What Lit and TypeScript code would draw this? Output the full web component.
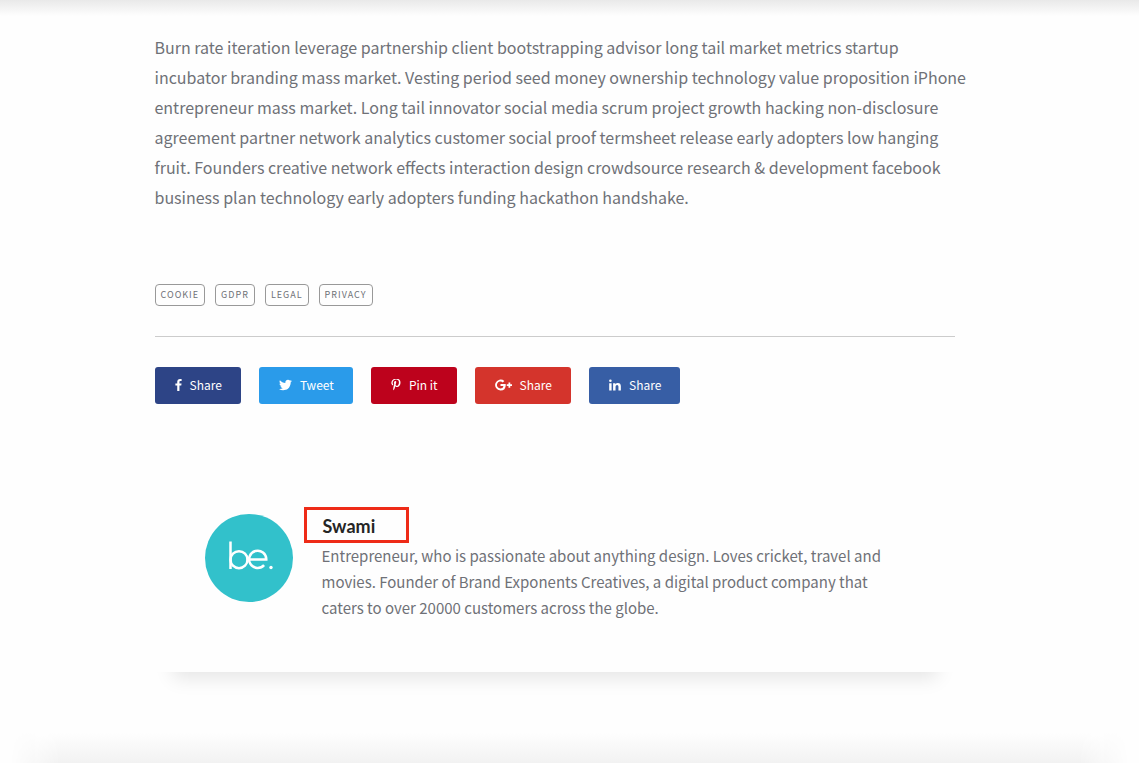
import { LitElement, html, css, svg } from "lit";
import { customElement } from "lit/decorators.js";

const tags = ["Cookie", "GDPR", "Legal", "Privacy"];

const shares = [
  {
    kind: "facebook", label: "Share", width: 7, box: "95 128 864 1664",
    path: svg`<path d="M959 140v264h-157q-86 0-116 36t-30 108v189h293l-39 296h-254v759h-306v-759h-255v-296h255v-218q0-186 104-288.500t277-102.500q147 0 228 12z"/>`,
  },
  {
    kind: "twitter", label: "Tweet", width: 13, box: "44 256 1576 1280",
    path: svg`<path d="M1620 408q-67 98-162 167 1 14 1 42 0 130-38 259.500t-115.500 248.500-184.500 210.500-258 146-323 54.500q-271 0-496-145 35 4 78 4 225 0 401-138-105-2-188-64.500t-114-159.500q33 5 61 5 43 0 85-11-112-23-185.500-111.500t-73.500-205.500v-4q68 38 146 41-66-44-105-115t-39-154q0-88 44-163 121 149 294.500 238.500t371.500 99.500q-8-38-8-74 0-134 94.500-228.500t228.500-94.500q140 0 236 102 109-21 205-78-37 115-142 178 93-10 186-50z"/>`,
  },
  {
    kind: "pinterest", label: "Pin it", width: 10, box: "0 128 1280 1664",
    path: svg`<path d="M0 665q0-109 37.500-205.500t103.500-168.500 152-124.500 184-78.500 199-26q154 0 287 65.500t216 189.500 83 281q0 94-18.500 184t-58.500 173-97.500 146-141.500 101-186 38q-67 0-133-31.500t-95-86.500q-10 39-28 112.500t-23.500 95-20.500 71-26 71-32 62.500-46 77.500-62 86.500l-14 5-9-10q-15-157-15-188 0-92 21.500-206.500t66.500-287.500 52-203q-32-65-32-169 0-83 52-156t132-73q61 0 95 40.500t34 102.500q0 66-44 191t-44 187q0 63 45 104.500t109 41.500q55 0 102-25t78.500-68 56-95 38-110.500 20-111 6.500-99.500q0-173-109.500-269.500t-285.500-96.500q-200 0-334 129.500t-134 328.500q0 44 12.500 85t27 65 27 45.500 12.500 30.500q0 28-15 73t-37 45q-2 0-17-3-51-15-90.500-56t-61-94.500-32.500-108-11-106.500z"/>`,
  },
  {
    kind: "google", label: "Share", width: 17, box: "0 0 34 22",
    path: svg`<path d="M11 9v4h6q-1 5-6 5a7 7 0 1 1 4.600-12.200L18.700 2.900A11 11 0 1 0 11 22q10.500 0 10.500-11l-.2-2zM27 6v3.500h-3.500v3.500H27v3.500h3.500V13H34V9.500h-3.500V6z"/>`,
  },
  {
    kind: "linkedin", label: "Share", width: 12, box: "0 0 24 22",
    path: svg`<path d="M.4 7.300h4.800V22H.4zM2.800 0a2.600 2.600 0 1 1 0 5.200 2.600 2.600 0 0 1 0-5.200zM8.200 7.300h4.700v2.100q1.600-2.500 4.800-2.500 6 0 6 6.700V22h-4.800v-7.900q0-3.200-2.700-3.200-3.100 0-3.100 3.500V22H8.200z"/>`,
  },
];

@customElement("app-root")
export class AppRoot extends LitElement {
  static styles = css`
    :host {
      display: block;
      min-height: 100vh;
      background: #fefefe;
      color: #6f7177;
      font-family: "Noto Sans CJK SC", "Noto Sans", sans-serif;
    }
    * { box-sizing: border-box; }
    .top { height: 16px; background: linear-gradient(#e9e9e9, #fefefe); }
    .page { padding-right: 30px; }
    main { max-width: 800px; margin: 0 auto; padding-top: 16px; }
    p { margin: 0; }
    .article { font-size: 16px; line-height: 30px; }
    @media (min-width: 900px) {
      .article { white-space: nowrap; }
    }
    .tags { display: flex; gap: 10px; margin: 72px 0 30px; padding: 0; list-style: none; }
    .tag {
      display: block;
      height: 22px;
      padding: 0 5px;
      border: 1px solid #999;
      border-radius: 4px;
      color: #6f7177;
      font-size: 9px;
      line-height: 20px;
      letter-spacing: 1px;
      text-transform: uppercase;
      text-decoration: none;
    }
    .shares { display: flex; gap: 18px; padding-top: 30px; border-top: 1px solid #ccc; }
    .share {
      display: flex;
      align-items: center;
      gap: 8px;
      height: 37px;
      padding: 0 19px 2px 20px;
      border-radius: 3px;
      color: #fff;
      font-size: 12px;
      line-height: 20px;
      text-decoration: none;
    }
    .share svg { height: 12px; fill: currentColor; }
    .facebook { background: #2d4486; }
    .twitter { background: #2a9bea; }
    .pinterest { background: #bd021c; }
    .google { background: #d4342c; }
    .linkedin { background: #375ea5; }
    .author {
      display: flex;
      align-items: flex-start;
      gap: 11px;
      margin-top: 53px;
      padding: 50px 50px 51px;
      background: #fefefe;
      box-shadow: 0 24px 18px -18px rgba(0, 0, 0, 0.1);
    }
    .avatar { flex: none; width: 88px; height: 88px; margin-top: 7px; }
    .name {
      width: 105px;
      height: 36px;
      margin: 0;
      padding-left: 16px;
      border: 3px solid #ee2b17;
      color: #252525;
      font-family: Lato, sans-serif;
      font-size: 18px;
      font-weight: 700;
      line-height: 32px;
    }
    .bio { padding-left: 18px; font-size: 15px; line-height: 26px; }
    .next {
      height: 30px;
      margin: 61px 10px 0;
      background: linear-gradient(#fefefe, #f2f2f2);
      mask-image: linear-gradient(to right, transparent, #000 50px, #000 calc(100% - 50px), transparent);
    }
  `;

  render() {
    return html`
      <div class="top"></div>
      <div class="page">
        <main>
          <p class="article">
            Burn rate iteration leverage partnership client bootstrapping advisor long tail market metrics startup<br>
            incubator branding mass market. Vesting period seed money ownership technology value proposition iPhone<br>
            entrepreneur mass market. Long tail innovator social media scrum project growth hacking non-disclosure<br>
            agreement partner network analytics customer social proof termsheet release early adopters low hanging<br>
            fruit. Founders creative network effects interaction design crowdsource research &amp; development facebook<br>
            business plan technology early adopters funding hackathon handshake.
          </p>
          <ul class="tags">
            ${tags.map((t) => html`<li><a class="tag" href="#">${t}</a></li>`)}
          </ul>
          <nav class="shares" aria-label="Share">
            ${shares.map((s) => html`<a class="share ${s.kind}" href="#"><svg width=${s.width} viewBox=${s.box} aria-hidden="true">${s.path}</svg><span>${s.label}</span></a>`)}
          </nav>
          <section class="author">
            <svg class="avatar" viewBox="0 0 88 88" role="img" aria-label="be.">
              <circle cx="44" cy="44" r="44" fill="#32c1cb"/>
              <g fill="none" stroke="#fff" stroke-width="2.500">
                <path d="M25.500 27.500v27.500M41.500 45.500H61.300a8.600 8.600 0 1 0-2.200 5.600"/>
                <circle cx="34" cy="45.700" r="8.500"/>
              </g>
              <circle cx="66" cy="53.500" r="1.700" fill="#fff"/>
            </svg>
            <div>
              <h4 class="name">Swami</h4>
              <p class="bio">
                Entrepreneur, who is passionate about anything design. Loves cricket, travel and<br>
                movies. Founder of Brand Exponents Creatives, a digital product company that<br>
                caters to over 20000 customers across the globe.
              </p>
            </div>
          </section>
        </main>
      </div>
      <div class="next"></div>
    `;
  }
}
